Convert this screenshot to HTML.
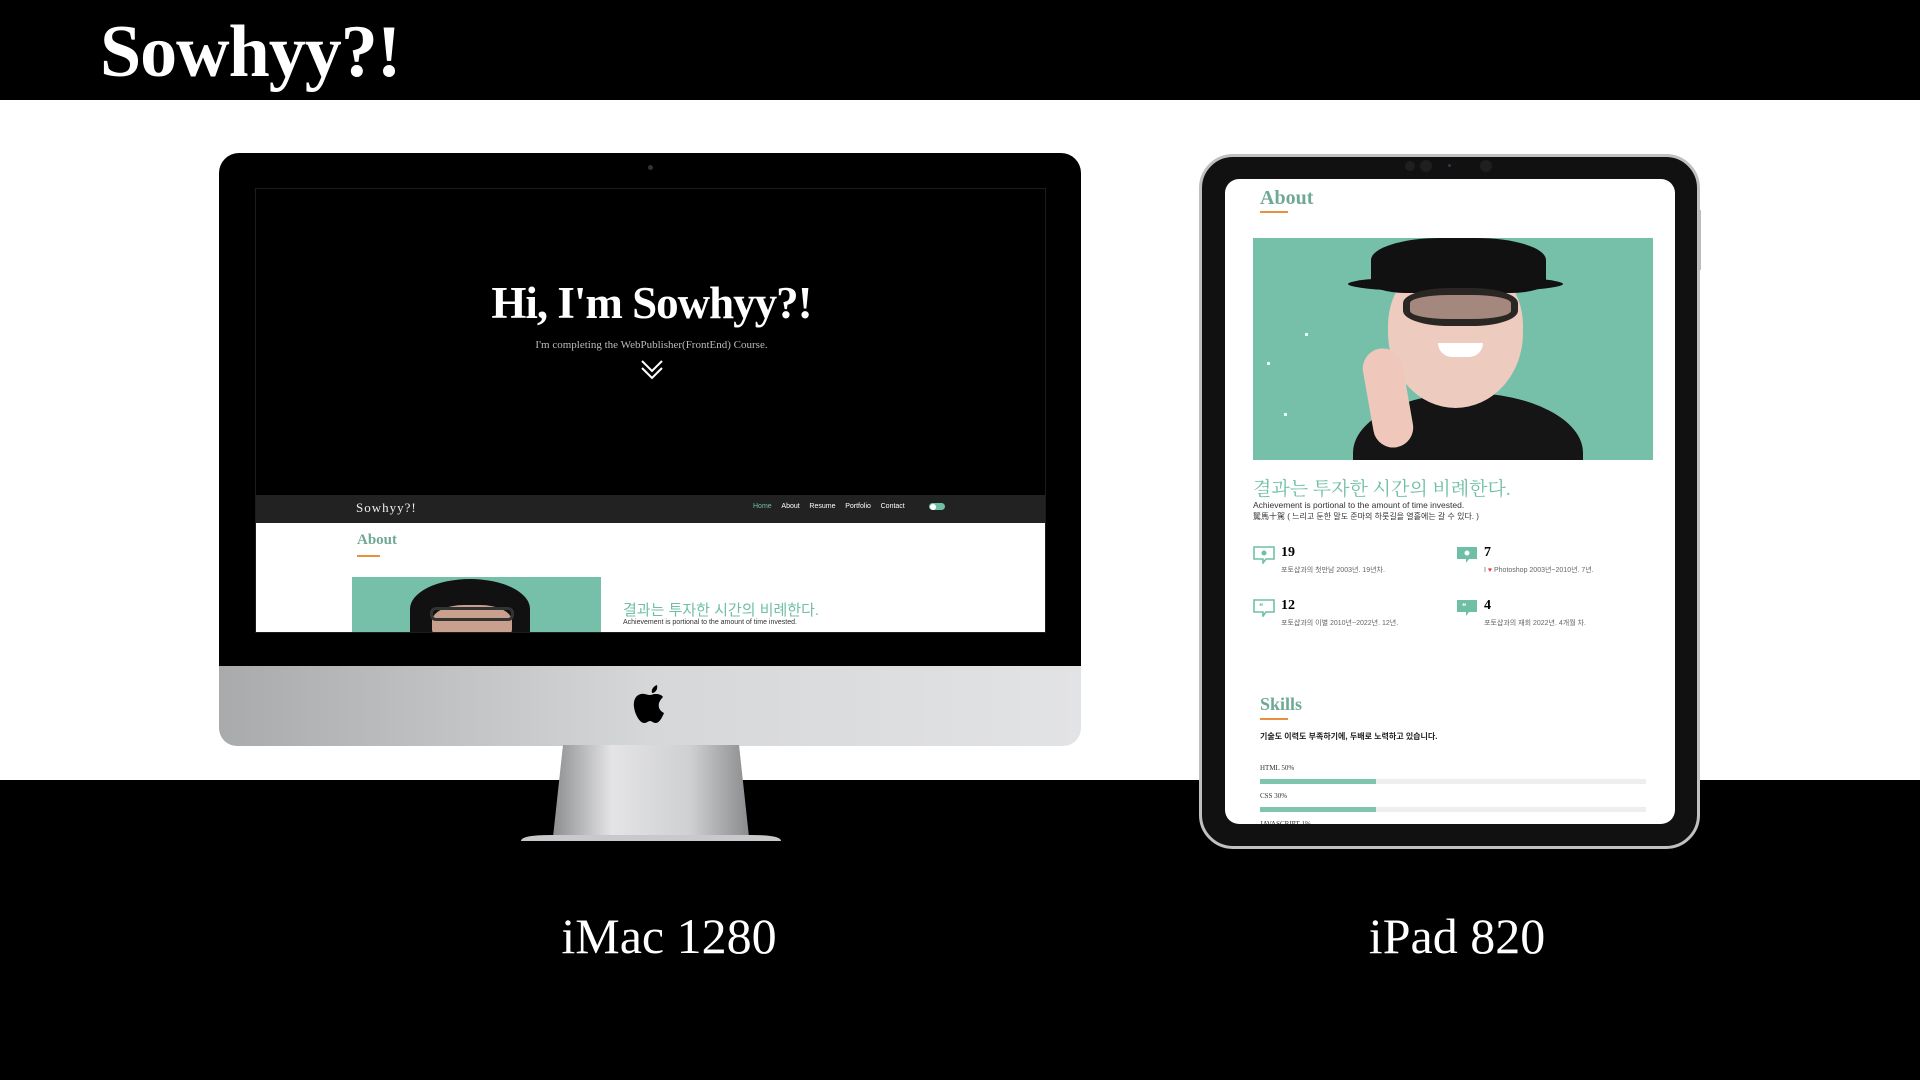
<!DOCTYPE html>
<html><head><meta charset="utf-8">
<style>
*{margin:0;padding:0;box-sizing:border-box}
body{width:1920px;height:1080px;background:#000;position:relative;overflow:hidden;font-family:"Liberation Serif","Noto Serif CJK SC",serif}
.abs{position:absolute}
.white{left:0;top:100px;width:1920px;height:680px;background:#fff}
.title{left:100px;top:10px;color:#fff;font-size:74px;font-weight:bold;letter-spacing:-1px}
.lbl{color:#fff;font-size:50px;top:907px;width:400px;text-align:center}
.kr{font-family:"Liberation Sans","Noto Sans CJK KR",sans-serif}
.teal{color:#6fbfa6}
</style></head><body>
<div class="abs white"></div>
<div class="abs title">Sowhyy?!</div>

<!-- iMac -->
<div class="abs" style="left:219px;top:153px;width:862px;height:520px;background:#000;border-radius:20px 20px 0 0"></div>
<div class="abs" style="left:219px;top:666px;width:862px;height:80px;background:linear-gradient(90deg,#a9aaac,#d6d7d9 50%,#e2e3e5);border-radius:0 0 18px 18px"></div>
<div class="abs" style="left:648px;top:165px;width:5px;height:5px;border-radius:50%;background:#333"></div>
<svg class="abs" style="left:632px;top:682px" width="36" height="44" viewBox="0 0 36 44"><path d="M25 3c-3 1-6 4-5 8 3 0 6-3 5-8zM18 13c-3 0-6-2-9-1-5 1-8 6-7 13 1 8 6 16 10 16 3 0 4-2 6-2s3 2 6 2c3 0 6-5 8-10-4-2-6-5-5-10 1-3 3-5 4-6-2-3-6-3-8-3-2 0-3 1-5 1z" fill="#000"/></svg>
<svg class="abs" style="left:519px;top:745px" width="264" height="100" viewBox="0 0 264 100"><defs><linearGradient id="st" x1="0" x2="1"><stop offset="0" stop-color="#8d8e90"/><stop offset=".3" stop-color="#e4e4e6"/><stop offset=".7" stop-color="#cfd0d2"/><stop offset="1" stop-color="#8a8b8d"/></linearGradient></defs><path d="M44 0h176l10 92H34z" fill="url(#st)"/><path d="M2 96q0-6 30-6h200q30 0 30 6z" fill="#c9c9cb"/></svg>

<!-- iMac screen -->
<div class="abs" style="left:255px;top:188px;width:791px;height:445px;background:#000;border:1px solid #1c1c1c;overflow:hidden">
  <div class="abs" style="left:0;top:88px;width:791px;text-align:center;color:#fff;font-size:45px;font-weight:bold;letter-spacing:-1px">Hi, I'm Sowhyy?!</div>
  <div class="abs" style="left:0;top:150px;width:791px;text-align:center;color:#bbb;font-size:11px">I'm completing the WebPublisher(FrontEnd) Course.</div>
  <svg class="abs" style="left:384px;top:170px" width="24" height="22" viewBox="0 0 24 22"><path d="M2 2l10 10 10-10M2 9l10 10 10-10" stroke="#fff" stroke-width="2" fill="none"/></svg>
  <div class="abs" style="left:0;top:306px;width:791px;height:28px;background:#222"></div>
  <div class="abs" style="left:100px;top:311px;color:#eee;font-size:13px;letter-spacing:1px">Sowhyy?!</div>
  <div class="abs kr" style="left:497px;top:314px;font-size:7px;color:#fff">
    <span style="color:#6fbfa6">Home</span>&nbsp;&nbsp;&nbsp;&nbsp;&nbsp;About&nbsp;&nbsp;&nbsp;&nbsp;&nbsp;Resume&nbsp;&nbsp;&nbsp;&nbsp;&nbsp;Portfolio&nbsp;&nbsp;&nbsp;&nbsp;&nbsp;Contact</div>
  <div class="abs" style="left:673px;top:314px;width:16px;height:7px;border-radius:4px;background:#6fbfa6"><div style="width:6px;height:6px;margin:.5px;border-radius:50%;background:#fff"></div></div>
  <div class="abs" style="left:0;top:334px;width:791px;height:111px;background:#fff"></div>
  <div class="abs teal" style="left:101px;top:343px;font-size:15px;font-weight:bold;color:#6fa994">About</div>
  <div class="abs" style="left:101px;top:366px;width:23px;height:2px;background:#e8913f"></div>
  <div class="abs" style="left:96px;top:388px;width:249px;height:60px;background:#76c0aa;overflow:hidden">
    <div class="abs" style="left:58px;top:2px;width:120px;height:60px;border-radius:50% 50% 0 0;background:#111"></div>
    <div class="abs" style="left:80px;top:28px;width:80px;height:40px;border-radius:40%;background:#c9a08e"></div>
    <div class="abs" style="left:78px;top:30px;width:84px;height:14px;border:3px solid #333;border-radius:6px"></div>
  </div>
  <div class="abs kr teal" style="left:367px;top:410px;font-size:15px">결과는 투자한 시간의 비례한다.</div>
  <div class="abs kr" style="left:367px;top:430px;font-size:7px;color:#333">Achievement is portional to the amount of time invested.</div>
</div>

<!-- iPad -->
<div class="abs" style="left:1199px;top:154px;width:501px;height:695px;background:#111;border:3px solid #bfc0c2;border-radius:34px"></div>
<div class="abs" style="left:1405px;top:161px;width:10px;height:10px;border-radius:50%;background:#1f1f1f"></div>
<div class="abs" style="left:1420px;top:160px;width:12px;height:12px;border-radius:50%;background:#1f1f1f"></div>
<div class="abs" style="left:1448px;top:164px;width:3px;height:3px;border-radius:50%;background:#335"></div>
<div class="abs" style="left:1480px;top:160px;width:12px;height:12px;border-radius:50%;background:#1f1f1f"></div>
<div class="abs" style="left:1225px;top:179px;width:450px;height:645px;background:#fff;border-radius:14px;overflow:hidden">
  <div class="abs" style="left:35px;top:8px;font-size:20px;font-weight:bold;color:#6fa994">About</div>
  <div class="abs" style="left:35px;top:32px;width:28px;height:2px;background:#e8913f"></div>
  <div class="abs" style="left:28px;top:59px;width:400px;height:222px;background:#76c0aa;overflow:hidden">
    <div class="abs" style="left:100px;top:155px;width:230px;height:120px;border-radius:50% 50% 0 0;background:#151515"></div>
    <div class="abs" style="left:135px;top:20px;width:135px;height:150px;border-radius:45% 45% 50% 50%;background:#eecbbf"></div>
    <div class="abs" style="left:118px;top:0px;width:175px;height:55px;border-radius:40% 40% 20% 20%;background:#111"></div>
    <div class="abs" style="left:95px;top:38px;width:215px;height:16px;border-radius:50%;background:#111"></div>
    <div class="abs" style="left:150px;top:50px;width:115px;height:38px;border:7px solid #2a2623;border-radius:40%;background:rgba(90,70,60,.5)"></div>
    <div class="abs" style="left:185px;top:105px;width:45px;height:14px;border-radius:0 0 20px 20px;background:#fff"></div>
    <div class="abs" style="left:115px;top:110px;width:40px;height:100px;border-radius:20px;background:#f0c8bb;transform:rotate(-10deg)"></div>
    <div class="abs" style="left:52px;top:95px;width:3px;height:3px;background:#dff"></div>
    <div class="abs" style="left:14px;top:124px;width:3px;height:3px;background:#dff"></div>
    <div class="abs" style="left:31px;top:175px;width:3px;height:3px;background:#dff"></div>
  </div>
  <div class="abs kr teal" style="left:28px;top:295px;font-size:19px;font-family:'Liberation Serif','Noto Serif CJK SC',serif">결과는 투자한 시간의 비례한다.</div>
  <div class="abs kr" style="left:28px;top:321px;font-size:8.5px;color:#333">Achievement is portional to the amount of time invested.</div>
  <div class="abs kr" style="left:28px;top:332px;font-size:8px;color:#333">駑馬十駕 ( 느리고 둔한 말도 준마의 하룻길을 열흘에는 갈 수 있다. )</div>

  <svg class="abs" style="left:28px;top:367px" width="22" height="18" viewBox="0 0 22 18"><path d="M1 1h20v12H13l-3 4v-4H1z" fill="none" stroke="#6fbfa6" stroke-width="1.6"/><circle cx="11" cy="7" r="2.5" fill="#6fbfa6"/></svg>
  <div class="abs" style="left:56px;top:366px;font-size:14px;font-weight:bold">19</div>
  <div class="abs kr" style="left:56px;top:386px;font-size:7px;color:#666">포토샵과의 첫만남 2003년. 19년차.</div>
  <svg class="abs" style="left:231px;top:367px" width="22" height="18" viewBox="0 0 22 18"><path d="M1 1h20v12H13l-3 4v-4H1z" fill="#6fbfa6"/><circle cx="11" cy="7" r="2.5" fill="#fff"/></svg>
  <div class="abs" style="left:259px;top:366px;font-size:14px;font-weight:bold">7</div>
  <div class="abs kr" style="left:259px;top:386px;font-size:7px;color:#666">I <span style="color:#e44">♥</span> Photoshop 2003년~2010년. 7년.</div>

  <svg class="abs" style="left:28px;top:420px" width="22" height="18" viewBox="0 0 22 18"><path d="M1 1h20v12H13l-3 4v-4H1z" fill="none" stroke="#6fbfa6" stroke-width="1.6"/><text x="6" y="10" font-size="8" fill="#6fbfa6">❝</text></svg>
  <div class="abs" style="left:56px;top:419px;font-size:14px;font-weight:bold">12</div>
  <div class="abs kr" style="left:56px;top:439px;font-size:7px;color:#666">포토샵과의 이별 2010년~2022년. 12년.</div>
  <svg class="abs" style="left:231px;top:420px" width="22" height="18" viewBox="0 0 22 18"><path d="M1 1h20v12H13l-3 4v-4H1z" fill="#6fbfa6"/><text x="6" y="10" font-size="8" fill="#fff">❝</text></svg>
  <div class="abs" style="left:259px;top:419px;font-size:14px;font-weight:bold">4</div>
  <div class="abs kr" style="left:259px;top:439px;font-size:7px;color:#666">포토샵과의 재회 2022년. 4개월 차.</div>

  <div class="abs" style="left:35px;top:515px;font-size:18px;font-weight:bold;color:#6fa994">Skills</div>
  <div class="abs" style="left:35px;top:539px;width:28px;height:2px;background:#e8913f"></div>
  <div class="abs kr" style="left:35px;top:552px;font-size:8px;color:#222;font-weight:bold">기술도 이력도 부족하기에, 두배로 노력하고 있습니다.</div>
  <div class="abs" style="left:35px;top:585px;font-size:7px;color:#333">HTML 50%</div>
  <div class="abs" style="left:35px;top:600px;width:386px;height:5px;background:#eee"><div style="width:116px;height:5px;background:#7fc4ae"></div></div>
  <div class="abs" style="left:35px;top:613px;font-size:7px;color:#333">CSS 30%</div>
  <div class="abs" style="left:35px;top:628px;width:386px;height:5px;background:#eee"><div style="width:116px;height:5px;background:#7fc4ae"></div></div>
  <div class="abs" style="left:35px;top:641px;font-size:7px;color:#333">JAVASCRIPT 1%</div>
</div>
<div class="abs" style="left:1698px;top:210px;width:3px;height:60px;background:#bbb"></div>

<div class="abs lbl" style="left:469px">iMac 1280</div>
<div class="abs lbl" style="left:1257px">iPad 820</div>
</body></html>
